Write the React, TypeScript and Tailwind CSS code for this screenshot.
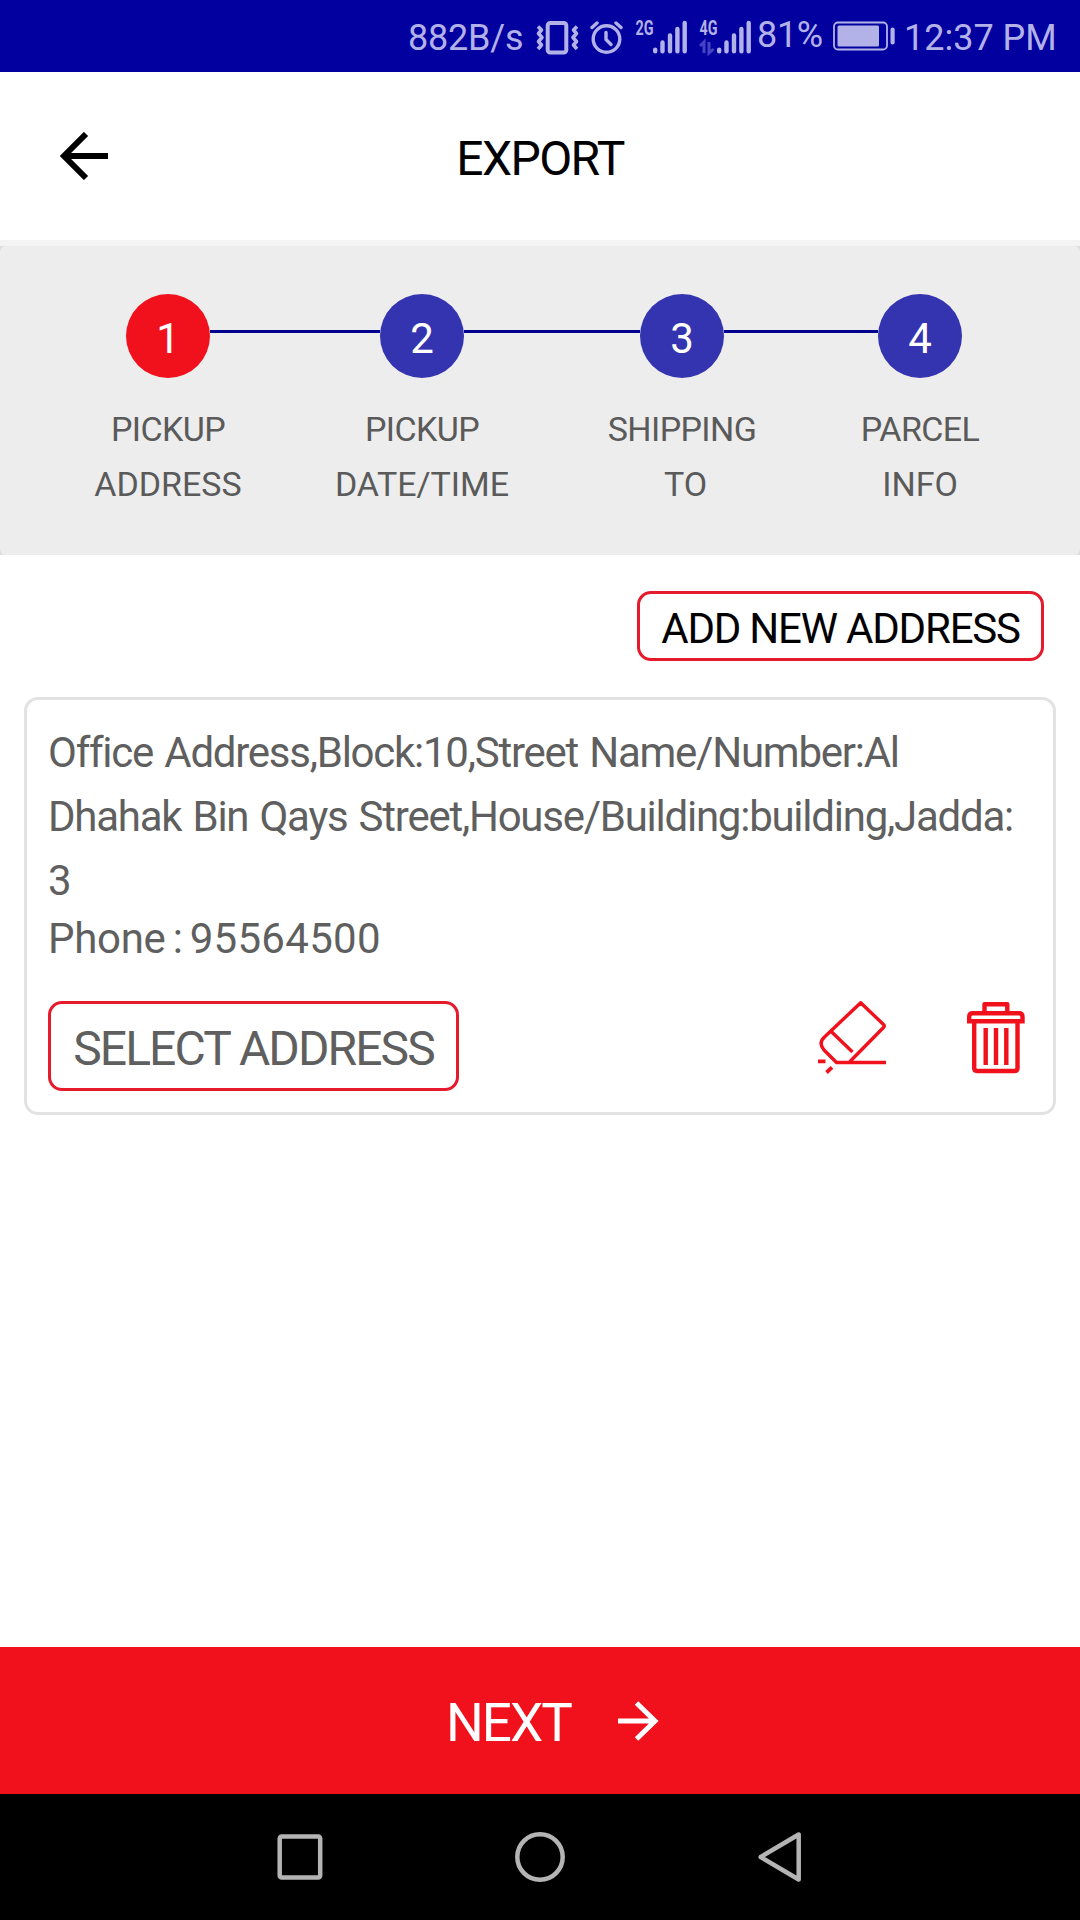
import { clsx } from "clsx";

type Step = {
  n: number;
  lines: [string, string];
  cell: string;
  active?: boolean;
};

const STEPS: Step[] = [
  { n: 1, lines: ["PICKUP", "ADDRESS"], cell: "w-[240px]", active: true },
  { n: 2, lines: ["PICKUP", "DATE/TIME"], cell: "w-[268px]" },
  { n: 3, lines: ["SHIPPING", "TO"], cell: "w-[252px]" },
  { n: 4, lines: ["PARCEL", "INFO"], cell: "w-[224px]" },
];

// connector after each step, the last one has none
const LINKS = ["w-[170px]", "w-[176px]", "w-[154px]"];

const ADDRESS = [
  "Office Address,Block:10,Street Name/Number:Al",
  "Dhahak Bin Qays Street,House/Building:building,Jadda:",
  "3",
];

function IconVibrate() {
  return (
    <svg width="43" height="34" viewBox="0 0 43 34" fill="none" stroke="currentColor" className="shrink-0">
      <rect x="11.7" y="2" width="18.6" height="29.5" rx="2.5" strokeWidth="4" />
      <path d="M2 5.5l3.5 3.5L2.5 12.5l3.5 4-3.5 4 3 3.5L2 28" strokeWidth="3.6" strokeLinejoin="round" />
      <path d="M41 5.5L37.5 9l3 3.5-3.5 4 3.5 4-3 3.5L41 28" strokeWidth="3.6" strokeLinejoin="round" />
    </svg>
  );
}

function IconAlarm() {
  return (
    <svg width="33" height="34" viewBox="0 0 33 34" fill="none" stroke="currentColor" strokeLinecap="round" className="ml-[11px] shrink-0">
      <circle cx="16.5" cy="18" r="13.3" strokeWidth="3.4" />
      <path d="M16 11.5v7l5 5" strokeWidth="3.4" strokeLinejoin="round" />
      <path d="M2 6.5L7 2M31 6.5L26 2" strokeWidth="3.4" />
    </svg>
  );
}

function Signal({ label, data = false }: { label: string; data?: boolean }) {
  return (
    <svg width="53" height="36" viewBox="0 0 53 36" className="shrink-0 overflow-visible">
      <text x="0.5" y="15" fill="currentColor" fontSize="20" fontWeight="700" textLength="18" lengthAdjust="spacingAndGlyphs">
        {label}
      </text>
      <path
        d="M20.2 29.800v1.500M27.500 22.500v8.800M35 15.500v15.800M42.400 9v22.300M49.700 3v28.300"
        stroke="currentColor"
        strokeWidth="4.4"
        strokeLinecap="round"
      />
      {data && (
        <path d="M1 26l4-4v11M10 22v11l4.500-4" stroke="#4643c4" strokeWidth="3" fill="none" />
      )}
    </svg>
  );
}

function IconBattery() {
  return (
    <svg width="63" height="30" viewBox="0 0 63 30" className="shrink-0">
      <rect x="2" y="1.5" width="53" height="27" rx="4" fill="none" stroke="currentColor" strokeWidth="1.8" />
      <rect x="5.5" y="4.500" width="41.5" height="21" rx="1.5" fill="currentColor" />
      <rect x="58.5" y="6.5" width="4.2" height="17" rx="2" fill="currentColor" />
    </svg>
  );
}

function IconEraser() {
  return (
    <svg width="69" height="73" viewBox="0 0 69 73" fill="none" stroke="currentColor" strokeWidth="3.4">
      <path d="M68 61.5H18.5L6 49Q0 42 6.5 36L42.7 1.7 65.5 23.5Q67 25 65.5 26.5L32 60.5" strokeLinejoin="round" />
      <path d="M12.7 30L34.5 51" />
      <path d="M0 60.3h7.5M14 66.3L8.5 71.5" strokeWidth="3.8" />
    </svg>
  );
}

function IconTrash() {
  return (
    <svg width="58" height="72" viewBox="0 0 58 72" fill="none" stroke="currentColor" strokeWidth="4.4" className="mt-px">
      <path d="M17.5 10V2.2h22.8V10" strokeLinejoin="round" />
      <path d="M2.2 19.2v-4.5q0-3.5 3.5-3.5h46.3q3.5 0 3.5 3.5v4.5z" />
      <path d="M7.2 20v46q0 3 3 3h37.3q3 0 3-3V20" />
      <path d="M18.7 26v37M29 26v37M39.3 26v37" />
    </svg>
  );
}

function StatusBar() {
  return (
    <div className="flex h-[72px] items-center bg-[#0300a0] pt-[3px] pl-[408px] text-[36px] whitespace-nowrap text-[#b3b2e8]">
      <span className="w-[128px] shrink-0 tracking-[-0.2px]">882B/s</span>
      <IconVibrate />
      <IconAlarm />
      <div className="ml-[12px] flex gap-[11px]">
        <Signal label="2G" />
        <Signal label="4G" data />
      </div>
      <span className="ml-[5px] w-[75px] shrink-0 pb-[6px] tracking-[-0.3px]">81%</span>
      <span className="shrink-0 pb-[3px]">
        <IconBattery />
      </span>
      <span className="ml-[9px]">12:37 PM</span>
    </div>
  );
}

function Header() {
  return (
    <header className="grid h-[168px] grid-cols-[1fr_auto_1fr] items-center bg-white text-black">
      <button className="ml-[60px] justify-self-start">
        <svg width="48" height="48" viewBox="0 0 48 48" fill="none" stroke="currentColor" strokeWidth="6">
          <path d="M48 24H5M26 2L4 24l22 22" />
        </svg>
      </button>
      <h1 className="pt-[5px] text-[48px] tracking-[-1.6px]">EXPORT</h1>
    </header>
  );
}

function Stepper() {
  return (
    <section className="border-t-[6px] border-[#f4f4f4] bg-[#dedede]">
      <div className="h-[309px] rounded-[6px] bg-[#ededed] pt-[48px]">
        <div className="flex pl-[126px]">
          {STEPS.map((s, i) => (
            <div key={s.n} className="flex">
              <span
                className={clsx(
                  "flex h-[84px] w-[84px] items-center justify-center rounded-full pt-[5px] text-[42px] text-white",
                  s.active ? "bg-[#f0111d]" : "bg-[#3534b0]",
                )}
              >
                {s.n}
              </span>
              {LINKS[i] && <span className={clsx("mt-[36px] h-[3px] bg-[#00008c]", LINKS[i])} />}
            </div>
          ))}
        </div>
        <div className="mt-[24px] flex pl-[48px] text-center text-[34px] leading-[55px] text-[#5a5a5a]">
          {STEPS.map((s) => (
            <div key={s.n} className={s.cell}>
              <p className="tracking-[-0.6px]">{s.lines[0]}</p>
              <p className={clsx(s.n === 3 && "pl-[7px]")}>{s.lines[1]}</p>
            </div>
          ))}
        </div>
      </div>
    </section>
  );
}

function AddressCard() {
  return (
    <article className="mx-[24px] mt-[36px] h-[418px] rounded-[14px] border-[3px] border-[#e2e2e2] pt-[21px] pr-[28px] pl-[20px] text-[42px] whitespace-nowrap text-[#5f5f5f]">
      <div className="pl-px leading-[64px] tracking-[-1.25px] [word-spacing:2px]">
        {ADDRESS.map((line) => (
          <p key={line}>{line}</p>
        ))}
      </div>
      <p className="pl-px leading-[52px] tracking-[-0.3px] [word-spacing:-3px]">
        Phone : <span className="tracking-[0.3px]">95564500</span>
      </p>
      <div className="mt-[36px] flex items-start justify-between">
        <button className="ml-px h-[90px] w-[411px] rounded-[14px] border-[3px] border-[#e51a2b] pt-[5px] text-[48px] leading-none tracking-[-1.9px]">
          SELECT ADDRESS
        </button>
        <div className="flex gap-[80px] text-[#f0111d]">
          <IconEraser />
          <IconTrash />
        </div>
      </div>
    </article>
  );
}

function NavBar() {
  return (
    <nav className="flex h-[126px] items-center bg-black pl-[277px] text-[#b4b4b4]">
      <svg width="46" height="50" viewBox="0 0 46 50" fill="none" stroke="currentColor" strokeWidth="4.5">
        <rect x="2.7" y="4.5" width="40.5" height="41" rx="2" />
      </svg>
      <svg width="50" height="50" viewBox="0 0 50 50" fill="none" stroke="currentColor" strokeWidth="4.5" className="ml-[192px]">
        <circle cx="25" cy="25" r="22.7" />
      </svg>
      <svg width="44" height="50" viewBox="0 0 44 50" fill="none" stroke="currentColor" strokeWidth="4.5" strokeLinejoin="round" className="ml-[193px]">
        <path d="M40.7 2.5v45L2.7 25z" />
      </svg>
    </nav>
  );
}

export default function App() {
  return (
    <div className="flex h-[1920px] w-[1080px] flex-col overflow-hidden bg-white font-['Roboto',sans-serif]">
      <StatusBar />
      <Header />
      <Stepper />
      <main className="flex-1">
        <div className="mt-[36px] mr-[36px] flex justify-end">
          <button className="h-[70px] w-[407px] rounded-[14px] border-[3px] border-[#e51a2b] pt-[5px] text-[42px] leading-none tracking-[-1.2px] whitespace-nowrap text-black">
            ADD NEW ADDRESS
          </button>
        </div>
        <AddressCard />
      </main>
      <button className="flex h-[147px] shrink-0 items-center bg-[#f0111d] pl-[446px] text-white">
        <span className="w-[172px] pt-[7px] text-left text-[53px] tracking-[-2px]">NEXT</span>
        <svg width="41" height="40" viewBox="0 0 41 40" fill="none" stroke="currentColor" strokeWidth="5">
          <path d="M0 20h37M18.5 2l18.500 18-18.500 18" />
        </svg>
      </button>
      <NavBar />
    </div>
  );
}
